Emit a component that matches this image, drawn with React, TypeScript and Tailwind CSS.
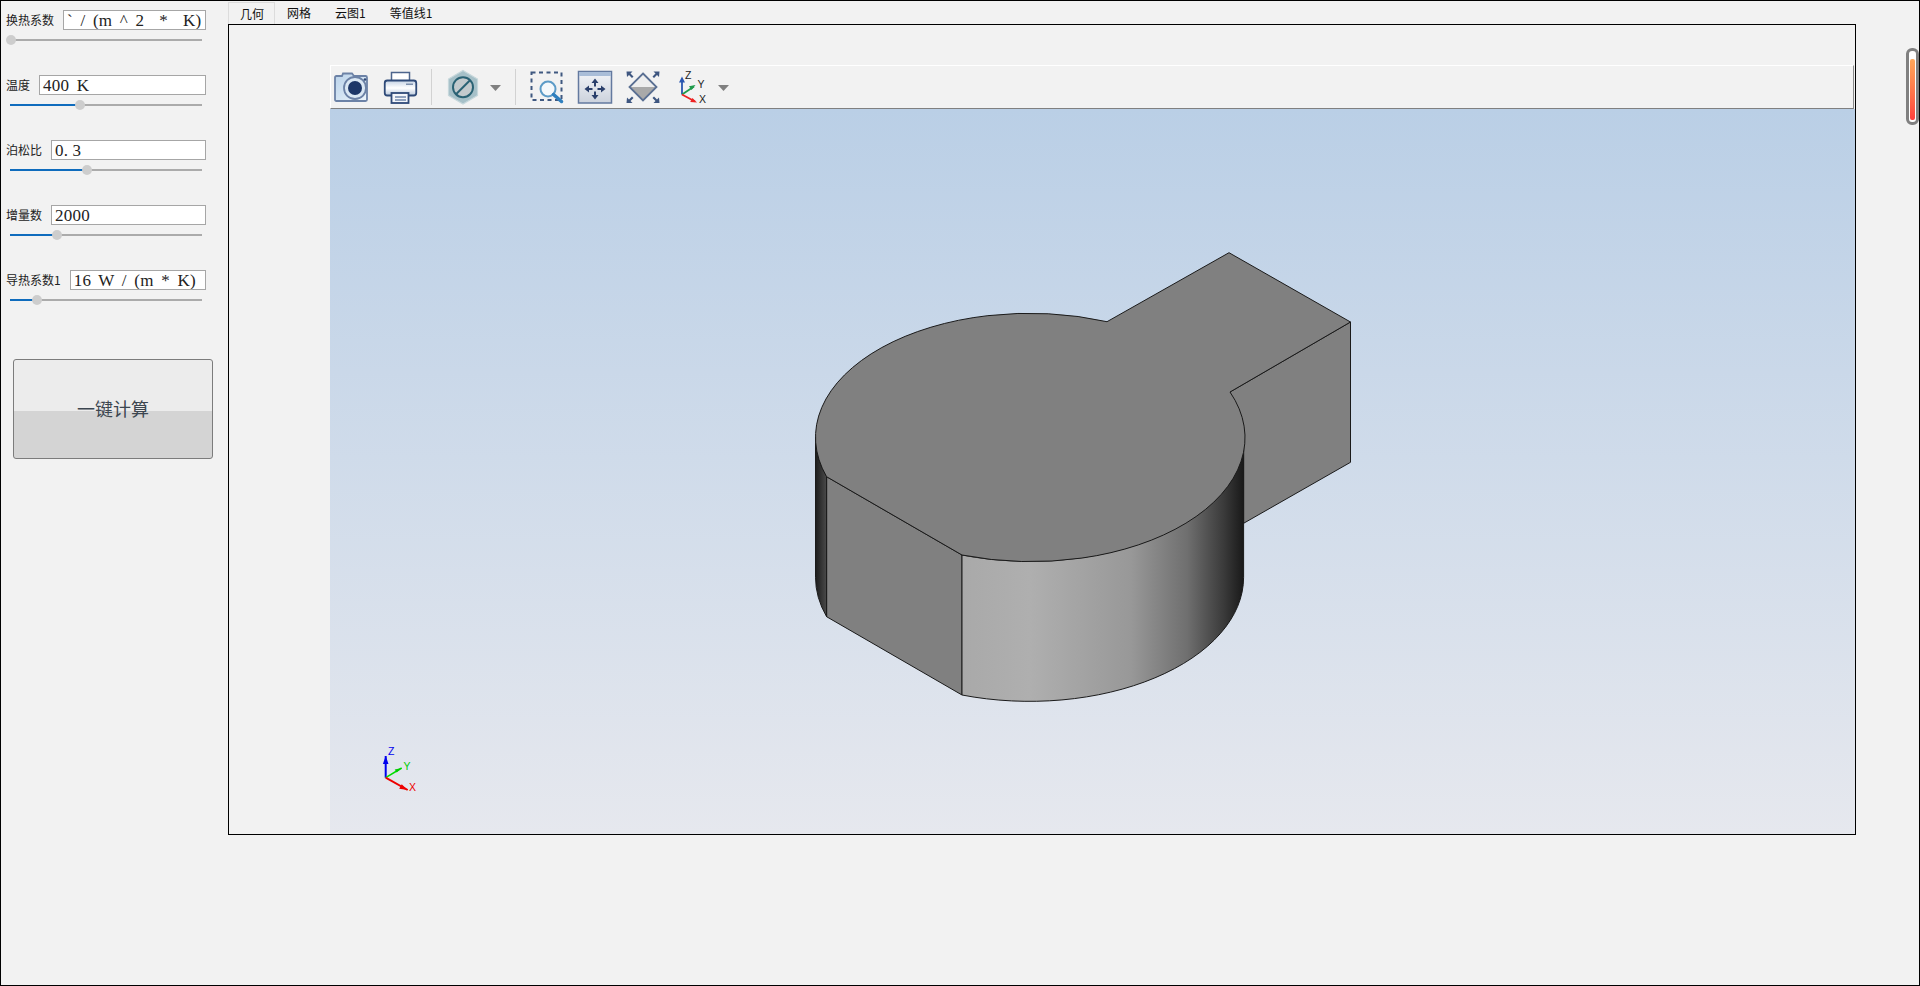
import type { ReactNode } from "react";

const params: { label: string; value: ReactNode; pos: number }[] = [
  { label: "换热系数", value: "` / (m ^ 2  *  K)", pos: 1 },
  { label: "温度", value: "400 K", pos: 70 },
  {
    label: "泊松比",
    value: (
      <>
        0<span className="tracking-[4.5px]">.</span>3
      </>
    ),
    pos: 77,
  },
  { label: "增量数", value: "2000", pos: 47 },
  { label: "导热系数1", value: "16 W / (m * K)", pos: 27 },
];

const tabs = ["网格", "云图1", "等值线1"];

function ParamRow({ label, value, pos }: { label: string; value: ReactNode; pos: number }) {
  return (
    <div className="w-[200px]">
      <div className="flex items-center gap-[9px]">
        <span className="text-[12px] leading-[20px] text-[#222] whitespace-nowrap">{label}</span>
        <div className="flex-1 h-[20px] min-w-0 bg-white border border-[#a6a6a6] pl-[3px] overflow-hidden whitespace-pre text-[17px] leading-[19px] tracking-[0.25px] [word-spacing:3px] text-[#222] font-['Liberation_Serif','Noto_Sans_CJK_SC',serif]">
          {value}
        </div>
      </div>
      <div className="relative mt-[9px] ml-[4px] w-[192px] h-[2px] bg-[#ababab]">
        <div className="absolute left-0 top-0 h-[2px] bg-[#0f6cbd]" style={{ width: pos }} />
        <div
          className="absolute top-[-4px] w-[10px] h-[10px] rounded-full bg-[#cdcdcd]"
          style={{ left: pos - 5 }}
        />
      </div>
    </div>
  );
}

function Caret() {
  return (
    <svg viewBox="0 0 11 36" className="w-[11px] h-[36px] shrink-0">
      <path d="M0 16h11l-5.500 6z" fill="#808080" />
    </svg>
  );
}

function Sep() {
  return <div className="w-px h-[36px] bg-[#d2d2d2] shrink-0" />;
}

function CameraIcon() {
  return (
    <svg viewBox="0 0 36 36" className="w-[36px] h-[36px] ml-[3px] shrink-0">
      <defs>
        <linearGradient id="cam" x1="0" y1="0" x2="1" y2="1">
          <stop offset="0" stopColor="#b9d2ea" />
          <stop offset="1" stopColor="#edf5fb" />
        </linearGradient>
      </defs>
      <path
        d="M3 7h5l1-2.500h9l2 2.500h11.500q1.500 0 1.500 1.500v22q0 1.500-1.500 1.500h-29q-1.500 0-1.500-1.500v-22q0-1.500 1.500-1.500z"
        fill="url(#cam)"
        stroke="#6c82a6"
        strokeWidth="1.800"
      />
      <circle cx="21" cy="19" r="11" fill="#dbe8f4" stroke="#6c82a6" strokeWidth="1.800" />
      <circle cx="21" cy="19" r="7" fill="#1d3768" />
      <circle cx="31" cy="10.500" r="1.300" fill="#2d4674" />
    </svg>
  );
}

function PrinterIcon() {
  return (
    <svg viewBox="0 0 35 36" className="w-[35px] h-[36px] ml-[13px] shrink-0">
      <defs>
        <linearGradient id="prt" x1="0" y1="0" x2="0" y2="1">
          <stop offset="0" stopColor="#c4d2e4" />
          <stop offset="0.500" stopColor="#ffffff" />
          <stop offset="1" stopColor="#b9c8dc" />
        </linearGradient>
      </defs>
      <rect x="8.500" y="3.500" width="18" height="9" fill="#fff" stroke="#4d658d" strokeWidth="1.500" />
      <rect x="1.750" y="11.500" width="31.500" height="15" rx="2.500" fill="url(#prt)" stroke="#2f4a78" strokeWidth="1.800" />
      <rect x="23" y="14.500" width="7" height="1.500" fill="#7d90ad" />
      <rect x="8.500" y="24" width="17" height="10" fill="#f4f6fa" stroke="#2f4a78" strokeWidth="1.800" />
      <path d="M12 28h11M12 31h11" stroke="#6f86aa" strokeWidth="1.300" />
    </svg>
  );
}

function StopIcon() {
  return (
    <svg viewBox="0 0 34 36" className="w-[34px] h-[36px] ml-[14px] shrink-0">
      <path d="M17 1.500l14.500 8.500v16.500l-14.500 8.500-14.500-8.500v-16.500z" fill="#a6c0c8" stroke="#c7d8dc" strokeWidth="1.200" />
      <circle cx="17" cy="18.200" r="10" fill="#c3cacd" stroke="#2a6274" strokeWidth="2" />
      <path d="M10 25.200l14-14" stroke="#2a6274" strokeWidth="2" />
    </svg>
  );
}

function ZoomBoxIcon() {
  return (
    <svg viewBox="0 0 35 36" className="w-[35px] h-[36px] ml-[13px] shrink-0">
      <rect x="2.500" y="3.500" width="30" height="27.500" fill="none" stroke="#3f5880" strokeWidth="2" strokeDasharray="4 3.500" />
      <circle cx="19" cy="20" r="7.500" fill="#f4f8fb" stroke="#5c9bc7" strokeWidth="2" />
      <path d="M24.500 25.500l8 7" stroke="#2f7fbe" strokeWidth="3.500" strokeLinecap="round" />
    </svg>
  );
}

function FitIcon() {
  return (
    <svg viewBox="0 0 36 36" className="w-[36px] h-[36px] ml-[13px] shrink-0">
      <defs>
        <linearGradient id="fit" x1="0" y1="0" x2="0" y2="1">
          <stop offset="0" stopColor="#f2f4f8" />
          <stop offset="1" stopColor="#ccd2dc" />
        </linearGradient>
      </defs>
      <rect x="1.500" y="2.500" width="33" height="31.500" fill="url(#fit)" stroke="#63799f" strokeWidth="1.500" />
      <rect x="2" y="3" width="32" height="4" fill="#a9bdd8" />
      <path d="M18 13v4.500M18 22.500v4.500M11 20h4.500M20.500 20h4.500" stroke="#2a3f6b" strokeWidth="2" />
      <path d="M18 9.500l-3.500 4.500h7zM18 30.500l-3.500-4.500h7zM7.500 20l4.500-3.500v7zM28.500 20l-4.500-3.500v7z" fill="#2a3f6b" />
    </svg>
  );
}

function DiamondIcon() {
  return (
    <svg viewBox="0 0 36 36" className="w-[36px] h-[36px] ml-[12px] shrink-0">
      <path d="M18 4.500l13.500 13.500h-27z" fill="#eeeeee" />
      <path d="M18 31.500l13.500-13.500h-27z" fill="#a9a9a9" />
      <path d="M18 4.500l13.500 13.500-13.500 13.500-13.500-13.500z" fill="none" stroke="#5a6f92" strokeWidth="1.800" />
      <path
        d="M1.500 2.500h6l-2 2 3 3-1.500 1.500-3-3-2 2zM34.500 2.500h-6l2 2-3 3 1.500 1.500 3-3 2 2zM1.500 34h6l-2-2 3-3-1.500-1.500-3 3-2-2zM34.500 34h-6l2-2-3-3 1.500-1.500 3 3 2-2z"
        fill="#3e5680"
      />
    </svg>
  );
}

function AxesIcon() {
  return (
    <svg viewBox="0 0 36 36" className="w-[36px] h-[36px] ml-[14px] shrink-0">
      <path d="M7 25.500v-14" stroke="#2a56b0" strokeWidth="1.800" />
      <path d="M7 7.500l-3 6h6z" fill="#2a56b0" />
      <path d="M7 25.500l12-8" stroke="#1f9a4a" strokeWidth="1.800" />
      <path d="M20.500 16l-6.500 1.200 2.600 3.800z" fill="#1f9a4a" />
      <path d="M7 25.500l13 7" stroke="#ee2222" strokeWidth="1.800" />
      <path d="M22 33.500l-6.800-.6 2.200-4z" fill="#ee2222" />
      <text x="10" y="10" fontSize="10.500" fill="#222" fontFamily="Liberation Sans, sans-serif">Z</text>
      <text x="22.500" y="19" fontSize="10.500" fill="#222" fontFamily="Liberation Sans, sans-serif">Y</text>
      <text x="24" y="34" fontSize="10.500" fill="#222" fontFamily="Liberation Sans, sans-serif">X</text>
    </svg>
  );
}

// model drawing, coordinates are page px
function ModelView() {
  const topArc =
    "M1107 321.700A214 124 0 0 0 826.600 476.700L962 555A214 124 0 0 0 1230 392L1350.500 322L1229 252.700Z";
  return (
    <svg viewBox="330 109 1525 725" className="absolute inset-0 w-full h-full">
      <defs>
        <linearGradient id="cyl" gradientUnits="userSpaceOnUse" x1="962" y1="0" x2="1243.600" y2="0">
          <stop offset="0" stopColor="#a9a9a9" />
          <stop offset="0.240" stopColor="#afafaf" />
          <stop offset="0.600" stopColor="#989898" />
          <stop offset="0.800" stopColor="#6f6f6f" />
          <stop offset="0.930" stopColor="#3a3a3a" />
          <stop offset="1" stopColor="#191919" />
        </linearGradient>
        <linearGradient id="cylLeft" gradientUnits="userSpaceOnUse" x1="815.500" y1="0" x2="826.600" y2="0">
          <stop offset="0" stopColor="#1c1c1c" />
          <stop offset="1" stopColor="#4a4a4a" />
        </linearGradient>
      </defs>
      <g stroke="#1a1a1a" strokeWidth="1" strokeLinejoin="round">
        {/* tab side */}
        <path d="M1230 392L1350.500 322V462.300L1243.600 523.300V437Z" fill="#808080" />
        {/* flat cut */}
        <path d="M826.600 476.700L962 555V695L826.600 616.700Z" fill="#808080" />
        {/* round walls */}
        <path d="M962 555A214 124 0 0 0 1243.600 437.300V577.300A214 124 0 0 1 962 695Z" fill="url(#cyl)" />
        <path d="M815.500 437.300A214 124 0 0 0 826.600 476.700V616.700A214 124 0 0 1 815.500 577.300Z" fill="url(#cylLeft)" />
        <path d={topArc} fill="#808080" />
      </g>
      {/* corner triad */}
      <g fontFamily="Liberation Sans, sans-serif" fontSize="10.500">
        <path d="M385.700 777.700V756" stroke="#0000ee" strokeWidth="2" />
        <path d="M385.700 756l-2.800 8h5.600z" fill="#0000ee" />
        <path d="M385.700 777.700L401.700 768" stroke="#00dd00" strokeWidth="1.500" />
        <path d="M401.700 768l-7 1.500 2 3z" fill="#00cc00" />
        <path d="M385.700 777.700L407.700 790" stroke="#ee0000" strokeWidth="2" />
        <path d="M407.700 790l-8.500-1.200 2.500-4.500z" fill="#ee0000" />
        <text x="388" y="755" fill="#0000ee">Z</text>
        <text x="403.500" y="770" fill="#00cc00">Y</text>
        <text x="409" y="791" fill="#ee0000">X</text>
      </g>
    </svg>
  );
}

export default function App() {
  return (
    <div className="w-[1920px] h-[986px] overflow-hidden flex border border-black bg-[#f2f2f2] font-['Noto_Sans_CJK_SC','Noto_Sans',sans-serif]">
      <aside className="w-[227px] shrink-0 pt-[9px] pl-[5px]">
        <div className="flex flex-col gap-[34px]">
          {params.map((p) => (
            <ParamRow key={p.label} {...p} />
          ))}
        </div>
        <button className="mt-[58px] ml-[7px] w-[200px] h-[100px] pb-[2px] rounded-[3px] border border-[#7c7c7c] bg-[linear-gradient(#ececec_52%,#d4d4d4_52%)] text-[18px] text-[#3c4650] flex items-center justify-center">
          一键计算
        </button>
      </aside>

      <main className="w-[1628px] shrink-0 flex flex-col">
        <div className="h-[23px] flex text-[12px] text-[#111]">
          <div className="mt-[1px] pl-[11px] pr-[10px] h-[22px] leading-[22px] border border-b-0 border-[#dcdcdc] bg-[#f2f2f2]">
            几何
          </div>
          {tabs.map((t) => (
            <div key={t} className="px-[12px] leading-[24px]">
              {t}
            </div>
          ))}
        </div>
        <div className="w-[1628px] h-[811px] border border-black pt-[40px] pl-[101px] flex flex-col">
          <div className="h-[44px] shrink-0 flex items-center border-t border-t-white border-l border-l-white border-r border-r-[#8a8a8a] border-b border-b-[#808080] mr-[1px] bg-[#f2f2f2]">
            <CameraIcon />
            <PrinterIcon />
            <div className="ml-[13px]"><Sep /></div>
            <StopIcon />
            <div className="ml-[10px]"><Caret /></div>
            <div className="ml-[14px]"><Sep /></div>
            <ZoomBoxIcon />
            <FitIcon />
            <DiamondIcon />
            <AxesIcon />
            <div className="ml-[7px]"><Caret /></div>
          </div>
          <div className="relative flex-1 bg-linear-to-b from-[#bacfe6] to-[#e6e8ee]">
            <ModelView />
          </div>
        </div>
      </main>

      <div className="flex-1 pt-[47px] pl-[50px]">
        <div className="w-[13px] h-[77px] rounded-[6px] border-[3px] border-[#808080] bg-white p-[1px]">
          <div className="mt-[7px] h-[calc(100%-8px)] rounded-[2px] bg-linear-to-b from-[#ffa75a] to-[#ff3d3d]" />
        </div>
      </div>
    </div>
  );
}
